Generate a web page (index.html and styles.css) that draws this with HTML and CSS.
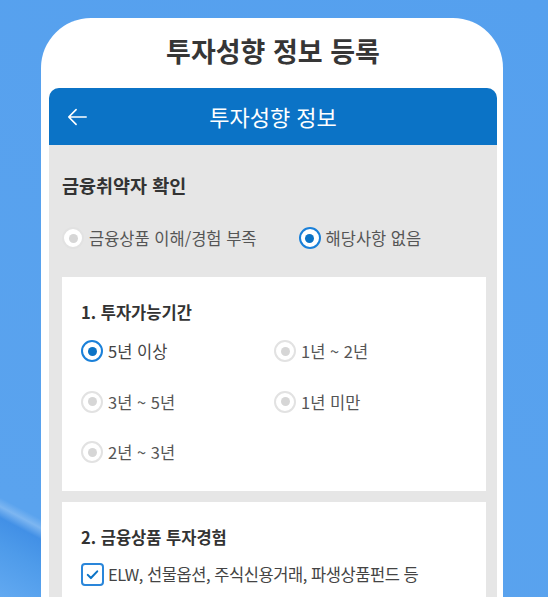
FILE: index.html
```html
<!DOCTYPE html>
<html lang="ko">
<head>
<meta charset="utf-8">
<title>투자성향 정보 등록</title>
<link rel="stylesheet" href="styles.css">
</head>
<body>
  <div class="stage">
    <div class="device">
      <h1 class="device-title">투자성향 정보 등록</h1>
      <div class="screen">
        <header class="appbar">
          <svg class="back" viewBox="0 0 24 24" aria-hidden="true">
            <path d="M22 12H3M11 4l-8 8 8 8"/>
          </svg>
          <span class="appbar-title">투자성향 정보</span>
          <span></span>
        </header>

        <main class="content">
          <section class="vulnerable">
            <h2 class="section-title">금융취약자 확인</h2>
            <div class="radio-row">
              <label class="option"><span class="radio"></span>금융상품 이해/경험 부족</label>
              <label class="option"><span class="radio is-checked"></span>해당사항 없음</label>
            </div>
          </section>

          <section class="card">
            <h3 class="question">1. 투자가능기간</h3>
            <div class="choice-grid">
              <label class="option option-dark"><span class="radio is-checked"></span>5년 이상</label>
              <label class="option"><span class="radio"></span>1년 ~ 2년</label>
              <label class="option"><span class="radio"></span>3년 ~ 5년</label>
              <label class="option"><span class="radio"></span>1년 미만</label>
              <label class="option"><span class="radio"></span>2년 ~ 3년</label>
            </div>
          </section>

          <section class="card card-last">
            <h3 class="question">2. 금융상품 투자경험</h3>
            <div class="check-list">
              <label class="option option-dark option-tight">
                <span class="checkbox is-checked">
                  <svg viewBox="0 0 24 24" aria-hidden="true"><path d="M6 12.5l4 4 8-8.5"/></svg>
                </span>ELW, 선물옵션, 주식신용거래, 파생상품펀드 등
              </label>
            </div>
          </section>
        </main>
      </div>
    </div>
  </div>
</body>
</html>
```

FILE: styles.css
```css
* {
  box-sizing: border-box;
}

html,
body {
  margin: 0;
  padding: 0;
}

body {
  width: 548px;
  height: 597px;
  overflow: hidden;
  font-family: "Noto Sans CJK KR", "Noto Sans", sans-serif;
  color: #333;
  /* blue backdrop with a soft light streak in the lower left */
  background:
    linear-gradient(28deg,
      #62a9f1 0px,
      #4e9bea 45px,
      #4290e6 70px,
      #7db6f1 80px,
      #5aa3ee 88px,
      #55a0ee 100%);
}

.stage {
  padding: 18px 0 0 41px;
}

/* white phone frame */
.device {
  width: 462px;
  height: 620px;
  background: #fff;
  border-radius: 50px 50px 0 0;
  padding: 0 6px 0 8px;
  display: flex;
  flex-direction: column;
}

.device-title {
  margin: 0;
  height: 70px;
  display: flex;
  align-items: center;
  justify-content: center;
  padding-bottom: 5px;
  font-size: 27px;
  font-weight: 700;
  color: #363636;
}

.screen {
  flex: 1;
  background: #e6e6e6;
  border-radius: 10px 10px 0 0;
  overflow: hidden;
}

/* app bar */
.appbar {
  height: 57px;
  background: #0b73c6;
  display: grid;
  grid-template-columns: 60px 1fr 60px;
  align-items: center;
}

.back {
  width: 22px;
  height: 22px;
  margin-left: 17px;
  fill: none;
  stroke: #fff;
  stroke-width: 1.8;
  stroke-linecap: round;
  stroke-linejoin: round;
}

.appbar-title {
  text-align: center;
  color: #fff;
  font-size: 22px;
  font-weight: 400;
  padding-bottom: 1px;
}

.content {
  padding: 0 11px 0 13px;
}

.section-title {
  margin: 28px 0 0;
  font-size: 18.5px;
  line-height: 24px;
  font-weight: 700;
  color: #333;
}

.radio-row {
  margin-top: 29px;
  display: flex;
  gap: 42px;
}

.option {
  display: flex;
  align-items: center;
  height: 24px;
  font-size: 16.5px;
  color: #555;
  white-space: nowrap;
}

.option-dark {
  color: #444;
}

.option-tight {
  letter-spacing: -0.45px;
}

/* radio button */
.radio {
  flex: none;
  width: 22px;
  height: 22px;
  margin-right: 5px;
  border-radius: 50%;
  border: 2.5px solid #e2e2e2;
  background: #fff;
  display: flex;
  align-items: center;
  justify-content: center;
}

.radio::after {
  content: "";
  width: 9px;
  height: 9px;
  border-radius: 50%;
  background: #d6d6d6;
}

.radio.is-checked {
  border-color: #1a80d9;
}

.radio.is-checked::after {
  background: #0b73c6;
}

/* question cards */
.card {
  margin-top: 27px;
  background: #fff;
  padding: 24px 0 24px 19px;
}

.card-last {
  margin-top: 11px;
  padding-bottom: 40px;
}

.question {
  margin: 0;
  font-size: 16.5px;
  line-height: 22px;
  font-weight: 700;
  color: #333;
}

.choice-grid {
  margin-top: 13px;
  display: grid;
  grid-template-columns: 193px 1fr;
  grid-auto-rows: 30px;
  row-gap: 20.5px;
  align-items: center;
}

.check-list {
  margin-top: 11px;
  height: 30px;
  display: flex;
  align-items: center;
}

/* checkbox */
.checkbox {
  flex: none;
  width: 23px;
  height: 23px;
  margin-right: 4px;
  border: 2px solid #2a86da;
  border-radius: 4px;
  background: #fff;
  display: flex;
  align-items: center;
  justify-content: center;
}

.checkbox svg {
  width: 19px;
  height: 19px;
  fill: none;
  stroke: #0b73c6;
  stroke-width: 2.6;
  stroke-linecap: round;
  stroke-linejoin: round;
}
```
